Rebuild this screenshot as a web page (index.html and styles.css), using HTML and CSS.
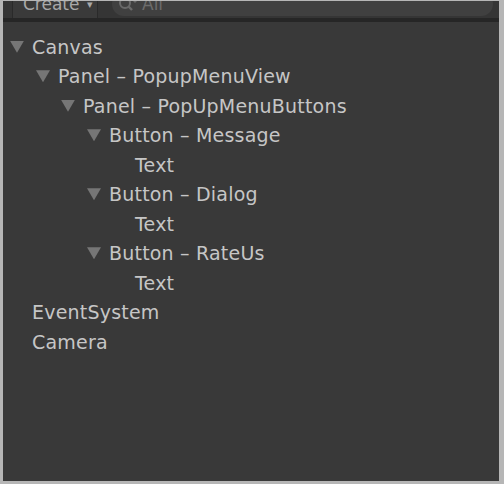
FILE: index.html
```html
<!DOCTYPE html>
<html>
<head>
<meta charset="utf-8">
<link rel="stylesheet" href="styles.css">
</head>
<body>
<div class="frame">
  <div class="toolbar">
    <div class="toolbar-inner">
      <div class="create">Create <span class="caret">▾</span></div>
      <div class="search">
        <svg class="mag" width="22" height="16" viewBox="0 0 22 16"><circle cx="7" cy="7" r="5" fill="none" stroke="#6a6a6a" stroke-width="2"/><path d="M10.5 10.5 L14 14" stroke="#6a6a6a" stroke-width="2.4"/><path d="M15 5 l2 2 l2 -2" fill="#6a6a6a"/></svg>
        <span class="ph">All</span>
      </div>
    </div>
  </div>
  <div class="tree">
    <div class="row l0"><span class="tri"></span>Canvas</div>
    <div class="row l1"><span class="tri"></span>Panel – PopupMenuView</div>
    <div class="row l2"><span class="tri"></span>Panel – PopUpMenuButtons</div>
    <div class="row l3"><span class="tri"></span>Button – Message</div>
    <div class="row l4"><span class="sp"></span>Text</div>
    <div class="row l3"><span class="tri"></span>Button – Dialog</div>
    <div class="row l4"><span class="sp"></span>Text</div>
    <div class="row l3"><span class="tri"></span>Button – RateUs</div>
    <div class="row l4"><span class="sp"></span>Text</div>
    <div class="row l0"><span class="sp"></span>EventSystem</div>
    <div class="row l0"><span class="sp"></span>Camera</div>
  </div>
</div>
</body>
</html>
```
FILE: styles.css
```css
html, body {
  margin: 0;
  padding: 0;
  background: #b6b6b6;
}
.frame {
  width: 496px;
  height: 480px;
  margin: 1px 5px 3px 3px;
  background: #393939;
  display: flex;
  flex-direction: column;
  overflow: hidden;
}
.toolbar {
  height: 17px;
  overflow: hidden;
  background: #353535;
  border-bottom: 4px solid #262626;
  flex: none;
}
.toolbar-inner {
  margin-top: -11px;
  height: 28px;
  display: flex;
  align-items: center;
  font-family: "DejaVu Sans", sans-serif;
  font-size: 17px;
  color: #a8a8a8;
}
.create {
  margin-left: 9px;
  width: 74px;
  height: 28px;
  line-height: 28px;
  padding-left: 10px;
  border-left: 1px solid #2a2a2a;
  border-right: 1px solid #2a2a2a;
  background: #3a3a3a;
}
.caret {
  font-size: 11px;
  margin-left: 2px;
  vertical-align: 2px;
}
.search {
  margin-left: 14px;
  flex: 1;
  margin-right: 6px;
  height: 24px;
  border-radius: 12px;
  background: #404040;
  display: flex;
  align-items: center;
  padding-left: 6px;
  color: #6c6c6c;
}
.mag { margin-right: 2px; }
.tree {
  padding-top: 10px;
  font-family: "DejaVu Sans", sans-serif;
  font-size: 19px;
  letter-spacing: 0.2px;
  color: #c6c6c6;
}
.row {
  height: 29.5px;
  display: flex;
  align-items: center;
  white-space: nowrap;
}
.tri, .sp {
  width: 14px;
  height: 12px;
  margin-right: 8px;
  flex: none;
}
.tri {
  background: #767676;
  clip-path: polygon(0 0, 100% 0, 50% 100%);
}
.l0 { padding-left: 7px; }
.l1 { padding-left: 33px; }
.l2 { padding-left: 58px; }
.l3 { padding-left: 84px; }
.l4 { padding-left: 110px; }
```
